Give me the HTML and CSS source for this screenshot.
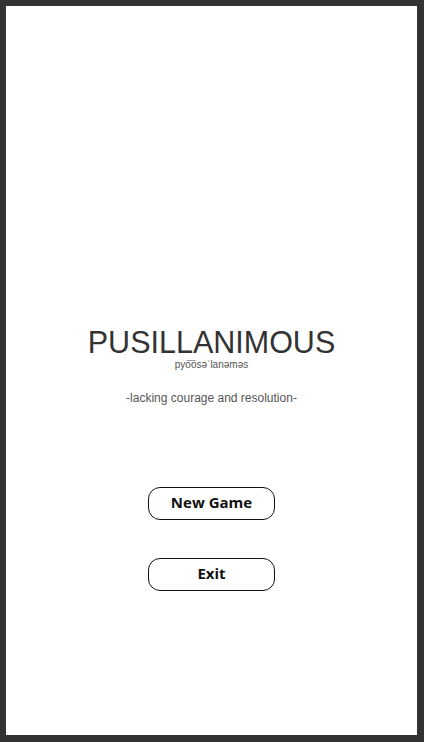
FILE: index.html
```html
<!DOCTYPE html>
<html lang="en">
<head>
<meta charset="utf-8">
<title>Pusillanimous</title>
<link rel="stylesheet" href="styles.css">
</head>
<body>
<div class="frame">
  <main class="screen">
    <header class="heading">
      <h1 class="title">PUSILLANIMOUS</h1>
      <p class="pron">pyo͞osəˈlanəməs</p>
      <p class="definition">-lacking courage and resolution-</p>
    </header>
    <nav class="menu">
      <button class="btn" type="button">New Game</button>
      <button class="btn" type="button">Exit</button>
    </nav>
  </main>
</div>
</body>
</html>
```

FILE: styles.css
```css
html, body {
  margin: 0;
  padding: 0;
  width: 424px;
  height: 742px;
  overflow: hidden;
  background: #333333;
}

.frame {
  box-sizing: border-box;
  width: 424px;
  height: 742px;
  border-style: solid;
  border-color: #333333;
  border-width: 6px 7px 7px 6px;
  background: #ffffff;
}

.screen {
  display: flex;
  flex-direction: column;
  align-items: center;
  padding-top: 321px;
}

.heading {
  display: flex;
  flex-direction: column;
  align-items: center;
}

.title {
  margin: 0;
  font-family: "Liberation Sans", Arial, sans-serif;
  font-weight: 400;
  font-size: 30.5px;
  line-height: 30px;
  color: #333333;
}

.pron {
  margin: 2px 0 0;
  font-family: "Liberation Sans", Arial, sans-serif;
  font-size: 10px;
  line-height: 12px;
  color: #555555;
}

.definition {
  margin: 20px 0 0;
  font-family: "Liberation Sans", Arial, sans-serif;
  font-size: 12px;
  line-height: 14px;
  color: #555555;
}

.menu {
  display: flex;
  flex-direction: column;
  align-items: center;
  gap: 38px;
  margin-top: 82px;
}

.btn {
  box-sizing: border-box;
  width: 127px;
  height: 33px;
  padding: 0 0 2px;
  border: 1.5px solid #111111;
  border-radius: 12px;
  background: #ffffff;
  font-family: "Open Sans", "Noto Sans", sans-serif;
  font-weight: 700;
  font-size: 15px;
  line-height: 1;
  color: #111111;
}
```
